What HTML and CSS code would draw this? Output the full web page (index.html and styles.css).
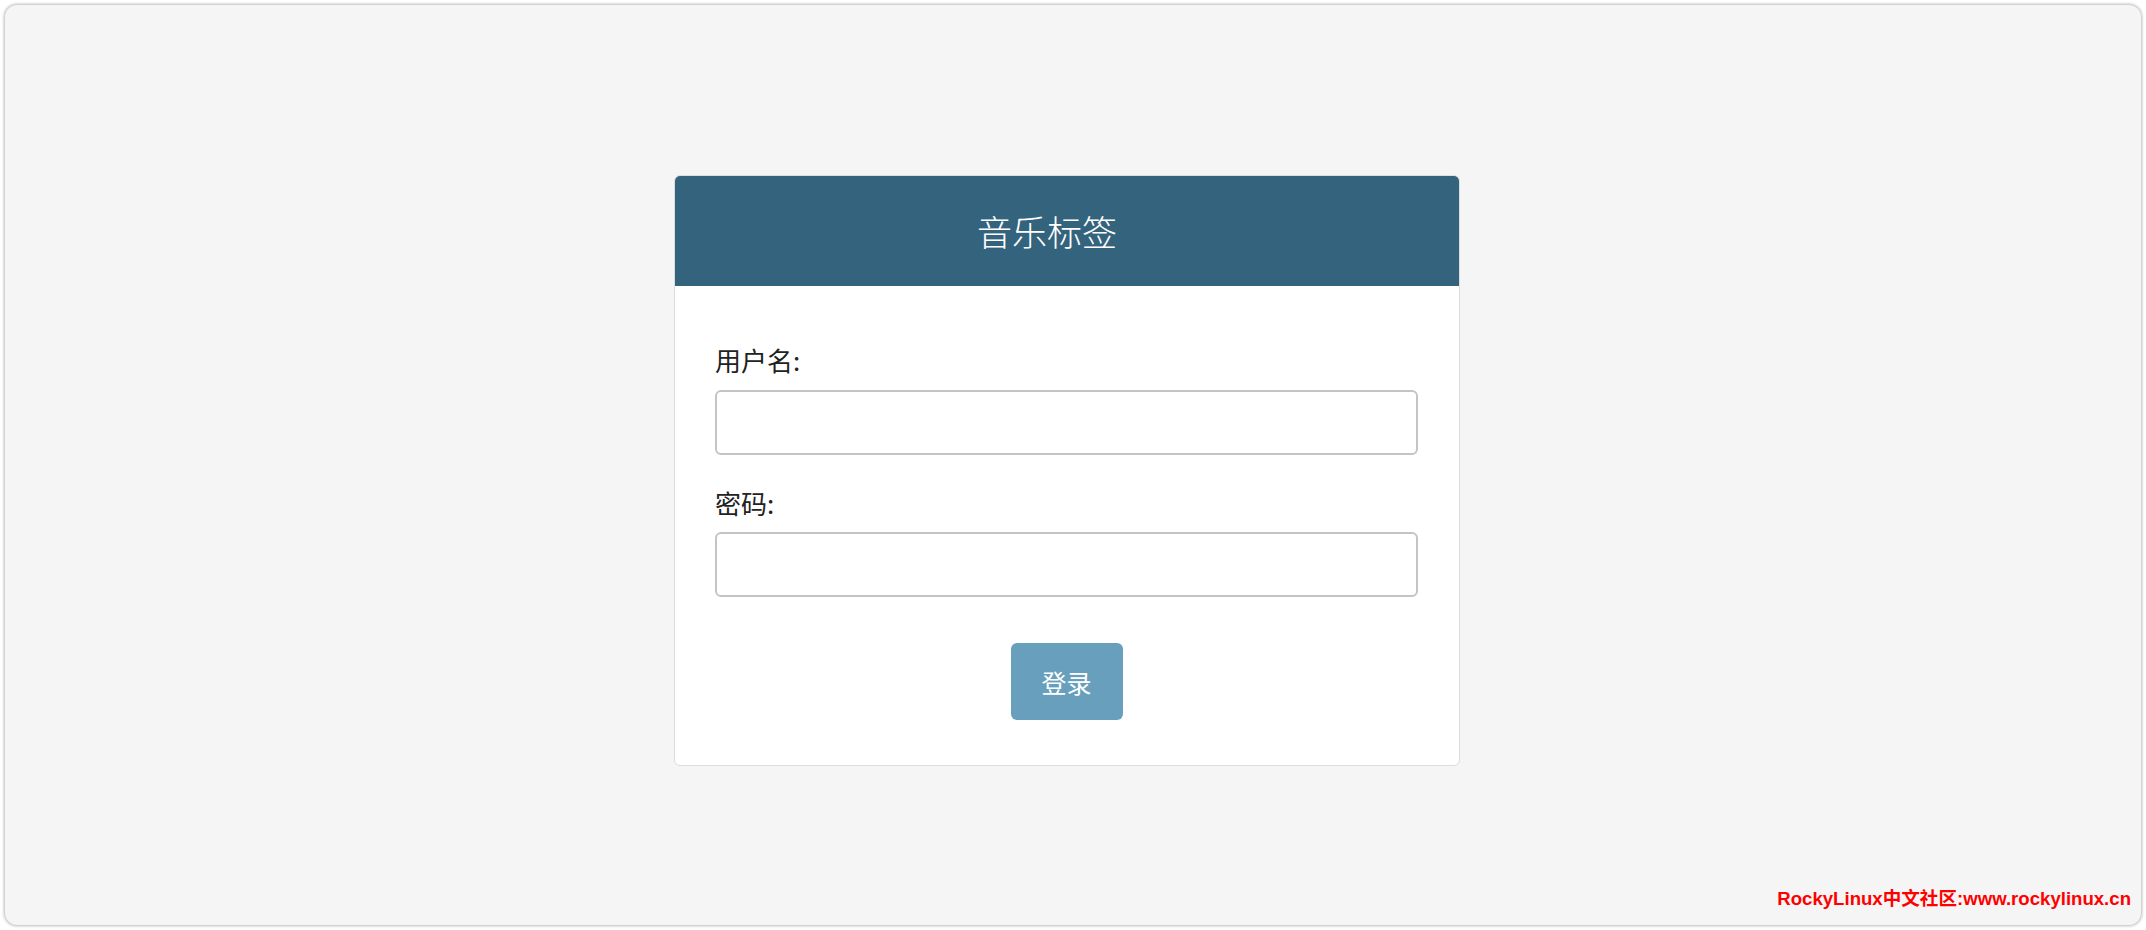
FILE: index.html
```html
<!DOCTYPE html>
<html lang="zh-CN">
<head>
<meta charset="utf-8">
<title>音乐标签</title>
<link rel="stylesheet" href="styles.css">
</head>
<body>
<div class="frame">
  <div class="card">
    <div class="card-header">音乐标签</div>
    <form class="card-body">
      <label class="label" for="u">用户名:</label>
      <input class="input" id="u" type="text">
      <label class="label label-2" for="p">密码:</label>
      <input class="input" id="p" type="password">
      <div class="actions"><button class="btn" type="button">登录</button></div>
    </form>
  </div>
  <div class="watermark">RockyLinux中文社区:www.rockylinux.cn</div>
</div>
</body>
</html>
```

FILE: styles.css
```css
html, body {
  margin: 0;
  padding: 0;
  background: #ffffff;
  font-family: "Noto Sans", "Noto Sans CJK SC", sans-serif;
}
.frame {
  position: relative;
  box-sizing: border-box;
  margin: 5px 5px 5px 5px;
  height: 920px;
  background: #f5f5f5;
  border-radius: 12px;
  box-shadow: 0 0 3px 1px rgba(0,0,0,0.28);
  display: flex;
  justify-content: center;
  align-items: flex-start;
  padding: 170px 12px 0 0;
}
.card {
  width: 786px;
  box-sizing: border-box;
  background: #ffffff;
  border: 1px solid #dddddd;
  border-radius: 6px;
  overflow: hidden;
}
.card-header {
  height: 111px;
  background: #34637d;
  color: #ffffff;
  font-family: "Noto Sans CJK SC", sans-serif;
  font-weight: 300;
  font-size: 35px;
  display: flex;
  align-items: center;
  justify-content: center;
  padding-right: 40px;
  margin: -1px -1px 0 -1px;
}
.card-body {
  display: flex;
  flex-direction: column;
  padding: 56px 41px 45px 40px;
  margin: 0;
}
.label {
  font-family: "Noto Sans CJK SC", sans-serif;
  font-size: 26px;
  line-height: 36px;
  color: #222222;
  margin-bottom: 12px;
}
.label-2 {
  margin-top: 30px;
  margin-bottom: 11px;
}
.input {
  box-sizing: border-box;
  height: 65px;
  width: 100%;
  border: 2px solid #c4c4c4;
  border-radius: 6px;
  background: #ffffff;
  margin: 0;
  outline: none;
}
.actions {
  display: flex;
  justify-content: center;
  margin-top: 46px;
}
.btn {
  width: 112px;
  height: 77px;
  border: none;
  border-radius: 6px;
  background: #679fbd;
  color: #ffffff;
  font-family: "Noto Sans CJK SC", sans-serif;
  font-size: 25px;
  padding: 0;
}
.watermark {
  position: absolute;
  right: 10px;
  bottom: 15px;
  color: #ff0000;
  font-family: "Liberation Sans", "Noto Sans CJK SC", sans-serif;
  font-weight: 700;
  font-size: 18.6px;
  line-height: 22px;
}
```
